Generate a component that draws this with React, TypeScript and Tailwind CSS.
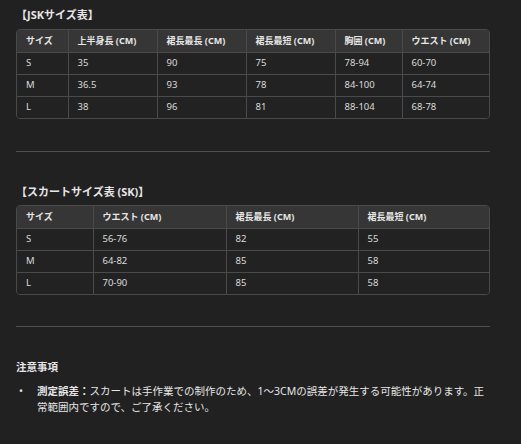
import React from "react";

const font = { fontFamily: '"Noto Sans", "Noto Sans CJK JP", sans-serif' };

function Table({ cols, widths, rows }: { cols: string[]; widths: string[]; rows: string[][] }) {
  return (
    <div className="rounded-[4px] border border-[#4a4a4a] overflow-hidden">
      <table className="w-full border-collapse table-fixed">
        <colgroup>
          {widths.map((w, i) => (
            <col key={i} className={w} />
          ))}
        </colgroup>
        <thead>
          <tr className="bg-[#363636] h-[22px]">
            {cols.map((c, i) => (
              <th
                key={i}
                className={`text-left font-bold text-[9px] text-[#e6e6e6] px-[9px] ${i > 0 ? "border-l border-[#4a4a4a]" : ""}`}
              >
                {c}
              </th>
            ))}
          </tr>
        </thead>
        <tbody>
          {rows.map((r, ri) => (
            <tr key={ri} className="h-[22px] border-t border-[#4a4a4a] bg-[#222222]">
              {r.map((v, i) => (
                <td
                  key={i}
                  className={`text-[9.5px] text-[#dcdcdc] px-[9px] ${i > 0 ? "border-l border-[#4a4a4a]" : ""}`}
                >
                  {v}
                </td>
              ))}
            </tr>
          ))}
        </tbody>
      </table>
    </div>
  );
}

export default function App() {
  return (
    <div className="w-[521px] h-[444px] bg-[#212121] text-[#e6e6e6] overflow-hidden" style={font}>
      <div className="ml-4 w-[474px] pt-[8px]">
        <div className="text-[11px] font-bold leading-[14px] mb-[7px]">【JSKサイズ表】</div>
        <Table
          cols={["サイズ", "上半身長 (CM)", "裙長最長 (CM)", "裙長最短 (CM)", "胸囲 (CM)", "ウエスト (CM)"]}
          widths={["w-[51px]", "w-[89px]", "w-[89px]", "w-[89px]", "w-[67px]", "w-[89px]"]}
          rows={[
            ["S", "35", "90", "75", "78-94", "60-70"],
            ["M", "36.5", "93", "78", "84-100", "64-74"],
            ["L", "38", "96", "81", "88-104", "68-78"],
          ]}
        />
        <div className="mt-[32px] h-px bg-[#4f4f4f]" />
        <div className="mt-[33px] text-[11px] font-bold leading-[14px] mb-[6px]">【スカートサイズ表 (SK)】</div>
        <Table
          cols={["サイズ", "ウエスト (CM)", "裙長最長 (CM)", "裙長最短 (CM)"]}
          widths={["w-[76px]", "w-[133px]", "w-[132px]", "w-[133px]"]}
          rows={[
            ["S", "56-76", "82", "55"],
            ["M", "64-82", "85", "58"],
            ["L", "70-90", "85", "58"],
          ]}
        />
        <div className="mt-[31px] h-px bg-[#4f4f4f]" />
        <div className="mt-[33px] text-[10.5px] font-bold leading-[14px]">注意事項</div>
        <div className="mt-[9px] flex text-[10.5px] leading-[16px]">
          <span className="w-[21px] pl-[3px] shrink-0">•</span>
          <p className="flex-1">
            <span className="font-bold">測定誤差：</span>スカートは手作業での制作のため、1〜3CMの誤差が発生する可能性があります。正常範囲内ですので、ご了承ください。
          </p>
        </div>
      </div>
    </div>
  );
}
